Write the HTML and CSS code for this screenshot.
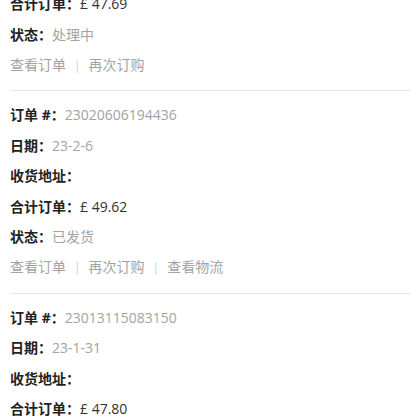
FILE: index.html
```html
<!DOCTYPE html>
<html lang="zh-CN">
<head>
    <meta charset="UTF-8">
    <meta name="viewport" content="width=device-width, initial-scale=1.0">
    <title>我的订单</title>
    <link rel="stylesheet" href="styles.css">
</head>
<body>
    <div id="order-list">
        <div class="order">
            <p><span class="label">订单 #：</span><span class="muted">23021311201548</span></p>
            <p><span class="label">日期：</span><span class="muted">23-2-13</span></p>
            <p><span class="label">收货地址：</span></p>
            <p><span class="label">合计订单：</span><span class="price">£ 47.69</span></p>
            <p><span class="label">状态：</span><span class="muted">处理中</span></p>
            <p class="actions"><a href="#">查看订单</a><span class="sep">|</span><a href="#">再次订购</a></p>
        </div>
        <div class="order">
            <p><span class="label">订单 #：</span><span class="muted">23020606194436</span></p>
            <p><span class="label">日期：</span><span class="muted">23-2-6</span></p>
            <p><span class="label">收货地址：</span></p>
            <p><span class="label">合计订单：</span><span class="price">£ 49.62</span></p>
            <p><span class="label">状态：</span><span class="muted">已发货</span></p>
            <p class="actions"><a href="#">查看订单</a><span class="sep">|</span><a href="#">再次订购</a><span class="sep">|</span><a href="#">查看物流</a></p>
        </div>
        <div class="order">
            <p><span class="label">订单 #：</span><span class="muted">23013115083150</span></p>
            <p><span class="label">日期：</span><span class="muted">23-1-31</span></p>
            <p><span class="label">收货地址：</span></p>
            <p><span class="label">合计订单：</span><span class="price">£ 47.80</span></p>
            <p><span class="label">状态：</span><span class="muted">已发货</span></p>
            <p class="actions"><a href="#">查看订单</a><span class="sep">|</span><a href="#">再次订购</a><span class="sep">|</span><a href="#">查看物流</a></p>
        </div>
    </div>
</body>
</html>
```
FILE: styles.css
```css
body {
    font-family: "Open Sans", "Noto Sans CJK SC", sans-serif;
    font-size: 14px;
    color: #333;
    background-color: #ffffff;
    margin: 0;
    padding: 0;
}
#order-list {
    /* la lista ya esta desplazada hacia abajo */
    margin-top: -111px;
    padding: 0 10px;
}
.order {
    padding: 9px 0;
    border-bottom: 1px solid #e6e6e6;
}
.order p {
    margin: 0;
    line-height: 30.4px;
    white-space: nowrap;
}
.label {
    font-weight: bold;
    color: #222;
}
.muted {
    color: #a3a3a3;
}
.price {
    color: #333;
}
.actions a {
    color: #a3a3a3;
    text-decoration: none;
}
.actions .sep {
    color: #d0d0d0;
    margin: 0 8px;
    font-size: 12px;
}
```
